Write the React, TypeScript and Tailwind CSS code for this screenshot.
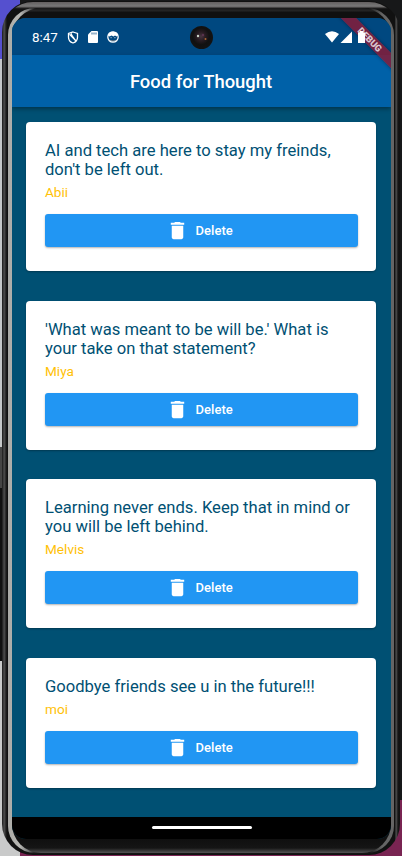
import React from "react";

type Quote = { lines: string[]; author: string };

const quotes: Quote[] = [
  { lines: ["AI and tech are here to stay my freinds,", "don't be left out."], author: "Abii" },
  { lines: ["'What was meant to be will be.' What is", "your take on that statement?"], author: "Miya" },
  { lines: ["Learning never ends. Keep that in mind or", "you will be left behind."], author: "Melvis" },
  { lines: ["Goodbye friends see u in the future!!!"], author: "moi" },
];

function TrashIcon() {
  return (
    <svg className="h-[23px] w-[23px]" viewBox="0 0 24 24" fill="white">
      <path d="M6 19c0 1.1.9 2 2 2h8c1.1 0 2-.9 2-2V7H6v12zM19 4h-3.500l-1-1h-5l-1 1H5v2h14V4z" />
    </svg>
  );
}

function QuoteCard({ quote }: { quote: Quote }) {
  return (
    <article className="rounded-[4px] bg-white px-[19px] pt-[19.200px] pb-[23.800px] shadow-[0_1px_2px_rgba(0,0,0,0.3)]">
      <p className="text-[16.600px] leading-[19px] text-[#005073]">
        {quote.lines.map((line) => (
          <span key={line} className="block whitespace-nowrap">{line}</span>
        ))}
      </p>
      <p className="mt-[6px] text-[13.600px] leading-[15px] text-[#ffc107]">{quote.author}</p>
      <button className="mt-[14px] flex h-[33px] w-[313px] items-center rounded-[3px] bg-[#2196f3] pl-[121px] text-[13px] font-medium text-white shadow-[0_1px_2px_rgba(0,0,0,0.3)]">
        <TrashIcon />
        <span className="ml-[6.500px] tracking-[0.050px]">Delete</span>
      </button>
    </article>
  );
}

function StatusBar() {
  return (
    <header className="flex h-[37px] shrink-0 items-center bg-[#004880] pt-[1px] pl-[20px] text-white">
      <span className="w-[26px] text-[13.400px] leading-[15px]">8:47</span>
      <svg className="ml-[9px] h-[13px] w-[12px]" viewBox="0 0 12 13" fill="none" stroke="white" strokeWidth="1.300">
        <path d="M6 1 10.500 2.400V6.200C10.500 9 8.400 11.200 6 12 3.600 11.200 1.500 9 1.500 6.200V2.400Z" />
        <path d="M2.500 3.200 9.200 10M4.300 2.200c-.3 3 2.700 3.900 3.500 7" />
      </svg>
      <svg className="ml-[9px] h-[12px] w-[10px]" viewBox="0 0 10 12">
        <path d="M3.500 0H9a1 1 0 0 1 1 1v10a1 1 0 0 1-1 1H1a1 1 0 0 1-1-1V3.600Z" fill="white" />
        <path d="M4 1.500v2M6 1.500v2M8 1.500v2" stroke="#004880" strokeWidth=".8" />
      </svg>
      <svg className="ml-[9px] h-[12px] w-[12px]" viewBox="0 0 12 12">
        <circle cx="6" cy="6" r="5.200" fill="none" stroke="white" strokeWidth="1.300" />
        <path d="M1 4.500C2 1 4 .8 6 .8s4.300.5 5 3.700L9.500 5.500 8 4.500 6.500 5.500 4.500 4.500 2.500 5.500Z" fill="white" />
        <path d="M3.500 6.700h1.200M7.300 6.700h1.200M3.500 9.500c1.500.8 3.500.8 5 0" stroke="white" strokeWidth=".7" />
      </svg>
      <div className="ml-[71px] flex h-[23px] w-[23px] items-center justify-center rounded-full bg-[radial-gradient(circle_at_48%_45%,#483640_0,#281c22_25%,#111_48%,#151515_100%)]">
        <svg className="h-[12px] w-[14px]" viewBox="0 0 14 12">
          <circle cx="3" cy="5" r="1.200" fill="#cbd7c9" />
          <circle cx="10.500" cy="8" r="1" fill="#ad6632" />
          <circle cx="8" cy="4" r="1.200" fill="#59334d" />
        </svg>
      </div>
      <svg className="ml-[111.500px] h-[12px] w-[42px]" viewBox="0 0 42 12" fill="white">
        <path d="M0 2.900Q7-2.200 14 2.900L7 11.500Z" />
        <path d="M27 .5V12H15.500Z" />
      </svg>
    </header>
  );
}

function Screen() {
  return (
    <div className="relative flex h-[821px] w-[379px] flex-col overflow-hidden rounded-[14px] bg-[#005073]">
      <StatusBar />
      <div className="z-10 flex h-[52px] shrink-0 items-center justify-center bg-[#0061a8] pt-[2px] pr-[1px] shadow-[0_2px_4px_rgba(0,0,0,0.35)]">
        <h1 className="text-[18.400px] leading-[22px] font-medium whitespace-nowrap text-white">Food for Thought</h1>
      </div>
      <main className="flex flex-1 flex-col gap-[29.670px] pr-[15px] pl-[14px] pt-[15px]">
        {quotes.map((quote) => (
          <QuoteCard key={quote.author} quote={quote} />
        ))}
      </main>
      <footer className="flex h-[22px] shrink-0 justify-center bg-black pt-[9px]">
        <div className="h-[3px] w-[100px] rounded-full bg-white" />
      </footer>
      <div className="absolute top-[15.500px] right-[-29px] z-20 flex h-[11px] w-[100px] rotate-45 items-center justify-center bg-[#851c38]/85 text-[9.400px] leading-none font-black text-white/75 shadow-[0_0_4px_rgba(0,0,0,0.4)]">
        DEBUG
      </div>
      <svg className="absolute top-[12.500px] right-[26px] z-30 h-[12px] w-[7px]" viewBox="0 0 7 12" fill="white">
        <path d="M0 1.500h2V0h3v1.500h2V12H0Z" />
      </svg>
    </div>
  );
}

export default function App() {
  return (
    <div className="relative flex h-[856px] w-[402px] overflow-hidden bg-[#202020] font-[Roboto,sans-serif]">
      <div className="flex w-[20px] shrink-0 flex-col">
        <div className="h-[59px] bg-[#5550cf]" />
        <div className="h-[388px] bg-[#c5c8c9]" />
        <div className="h-[41px] bg-[#454545]" />
        <div className="h-[173px] bg-[#111]" />
        <div className="flex-1 bg-[#c9caca]" />
      </div>
      <div className="flex flex-1 flex-col">
        <div className="flex-1 bg-[#171819]" />
        <div className="h-[56px] bg-[#792452]" />
      </div>
      <div className="absolute top-px left-[2px] h-[854px] w-[398px] rounded-[31px] bg-[linear-gradient(90deg,#252525_0,#252525_1px,#555_2px,#393939_3px,#111_5px,#111_393px,#555_394px,#161616_396px,#111_398px)] p-[1px]">
        <div className="h-full w-full rounded-[30px] bg-[linear-gradient(#646060_0,#777_4px,#656262_5px,#252525_6px,transparent_7px,transparent_847px,#151515_100%)] pt-[6px] pr-[5px] pb-px pl-[5px]">
          <div className="h-full w-full rounded-[27px] bg-[linear-gradient(90deg,#aaaaa6_0,#b8b8b4_12px,#777_20px,#111_28px,#111_360px,#656565_374px,#656565_386px)] pr-[3px] pl-[4px]">
            <div className="h-full w-full rounded-[29px] bg-[linear-gradient(#191919_0,#252525_3px,#101010_4px,#101010_832px,#151515_840px,#555_845px)] pt-[10px]">
              <Screen />
            </div>
          </div>
        </div>
      </div>
    </div>
  );
}
